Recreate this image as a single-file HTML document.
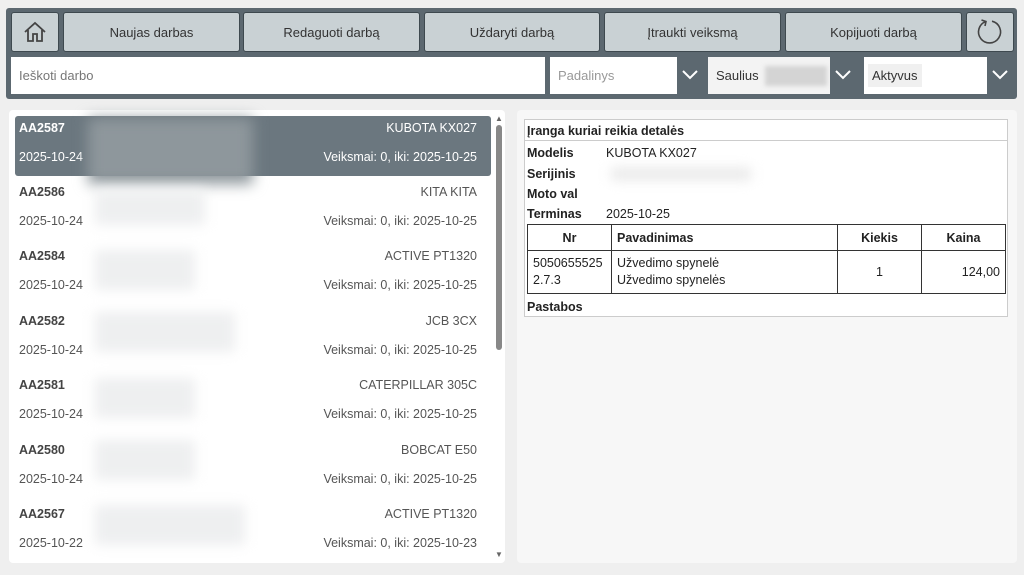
<!DOCTYPE html>
<html><head><meta charset="utf-8"><style>
*{box-sizing:border-box;margin:0;padding:0}
body{width:1024px;height:575px;background:#efefef;font-family:"Liberation Sans",sans-serif;position:relative;overflow:hidden;color:#222}
.abs{position:absolute}
.bar{left:6px;top:8px;width:1011px;height:91px;background:#5c6870;border-radius:3px}
.btn{top:12px;height:40px;background:#c9d1d4;border:1.5px solid #3e494f;border-radius:3px;font-size:13px;color:#333;display:flex;align-items:center;justify-content:center}
.inp{top:57px;height:37px;background:#fff;font-size:13px;display:flex;align-items:center;padding-left:8px;color:#777}
.chev{top:57px;height:37px;width:26px;background:#5c6870}
.panel{background:#fff;border-radius:4px}
.row{left:15px;width:476px;height:60px;font-size:12.5px;color:#555}
.row b{position:absolute;left:4px;top:5px;color:#444}
.row .d{position:absolute;left:4px;top:34px}
.row .m{position:absolute;right:14px;top:5px}
.row .v{position:absolute;right:14px;top:34px}
.sel{background:#6b777f;color:#fff;border-radius:3px}
.sel b,.sel .d,.sel .m,.sel .v{color:#fff}
.blur{background:#eeeff0;filter:blur(6px)}
td,th{border:1px solid #333;font-size:12.5px;padding:2px 5px}
</style></head><body>
<div class="abs bar"></div>
<div class="abs btn" style="left:11px;width:48px"><svg width="26" height="24" viewBox="0 0 26 24"><path d="M3 12 L13 3 L23 12 M6 10 V21 H11 V14 H15 V21 H20 V10" fill="none" stroke="#444" stroke-width="1.8"/></svg></div>
<div class="abs btn" style="left:63px;width:177px">Naujas darbas</div>
<div class="abs btn" style="left:243px;width:177px">Redaguoti darbą</div>
<div class="abs btn" style="left:424px;width:176px">Uždaryti darbą</div>
<div class="abs btn" style="left:604px;width:177px">Įtraukti veiksmą</div>
<div class="abs btn" style="left:785px;width:177px">Kopijuoti darbą</div>
<div class="abs btn" style="left:966px;width:48px"><svg width="30" height="30" viewBox="0 0 30 30"><path d="M11 4.5 A11 11 0 1 0 17 4.2" fill="none" stroke="#444" stroke-width="1.6"/><path d="M10 9 L11 4.5 L6.5 3" fill="none" stroke="#444" stroke-width="1.6"/></svg></div>
<div class="abs inp" style="left:11px;width:534px">Ieškoti darbo</div>
<div class="abs inp" style="left:550px;width:127px;color:#999">Padalinys</div>
<div class="abs chev" style="left:677px"></div>
<div class="abs inp" style="left:708px;width:122px;background:#f3f3f3;color:#333">Saulius<span style="display:inline-block;width:62px;height:20px;background:#d4d4d4;margin-left:6px;filter:blur(2px)"></span></div>
<div class="abs chev" style="left:830px"></div>
<div class="abs inp" style="left:864px;width:123px;color:#333"><span style="background:#f0f0f0;padding:4px 4px;margin-left:-4px">Aktyvus</span></div>
<div class="abs chev" style="left:987px"></div>
<svg class="abs" style="left:0;top:0" width="1024" height="100"><g fill="none" stroke="#fff" stroke-width="2"><path d="M683 71 L690 78 L697 71"/><path d="M836 71 L843 78 L850 71"/><path d="M993 71 L1000 78 L1007 71"/></g></svg>
<div class="abs panel" style="left:9px;top:110px;width:496px;height:453px"></div>
<div class="abs panel" style="left:517px;top:110px;width:500px;height:453px;background:#f7f7f7"></div>
<div class="abs row sel" style="top:116px"><b>AA2587</b><span class="d">2025-10-24</span><span class="m">KUBOTA KX027</span><span class="v">Veiksmai: 0, iki: 2025-10-25</span></div>
<div class="abs row" style="top:180px"><b>AA2586</b><span class="d">2025-10-24</span><span class="m">KITA KITA</span><span class="v">Veiksmai: 0, iki: 2025-10-25</span></div>
<div class="abs row" style="top:244px"><b>AA2584</b><span class="d">2025-10-24</span><span class="m">ACTIVE PT1320</span><span class="v">Veiksmai: 0, iki: 2025-10-25</span></div>
<div class="abs row" style="top:309px"><b>AA2582</b><span class="d">2025-10-24</span><span class="m">JCB 3CX</span><span class="v">Veiksmai: 0, iki: 2025-10-25</span></div>
<div class="abs row" style="top:373px"><b>AA2581</b><span class="d">2025-10-24</span><span class="m">CATERPILLAR 305C</span><span class="v">Veiksmai: 0, iki: 2025-10-25</span></div>
<div class="abs row" style="top:438px"><b>AA2580</b><span class="d">2025-10-24</span><span class="m">BOBCAT E50</span><span class="v">Veiksmai: 0, iki: 2025-10-25</span></div>
<div class="abs row" style="top:502px"><b>AA2567</b><span class="d">2025-10-22</span><span class="m">ACTIVE PT1320</span><span class="v">Veiksmai: 0, iki: 2025-10-23</span></div>
<div class="abs" style="left:88px;top:118px;width:165px;height:66px;background:#8e979c;filter:blur(7px)"></div>
<div class="abs blur" style="left:95px;top:190px;width:110px;height:35px"></div>
<div class="abs blur" style="left:95px;top:250px;width:100px;height:40px"></div>
<div class="abs blur" style="left:95px;top:312px;width:140px;height:40px"></div>
<div class="abs blur" style="left:95px;top:378px;width:100px;height:40px"></div>
<div class="abs blur" style="left:95px;top:440px;width:100px;height:40px"></div>
<div class="abs blur" style="left:95px;top:505px;width:150px;height:40px"></div>
<div class="abs" style="left:496px;top:125px;width:6px;height:225px;background:#888;border-radius:3px"></div>
<div class="abs" style="left:495px;top:114px;font-size:8px;color:#666">▲</div>
<div class="abs" style="left:495px;top:550px;font-size:8px;color:#666">▼</div>
<div class="abs" style="left:524px;top:119px;width:484px;height:198px;background:#fff;border:1px solid #ccc">
<div style="font-size:12.5px;font-weight:bold;padding:4px 2px;border-bottom:1px solid #ccc;height:21px">Įranga kuriai reikia detalės</div>
<div style="font-size:12.5px;position:relative;height:82px">
<b style="position:absolute;left:2px;top:5px">Modelis</b><span style="position:absolute;left:81px;top:5px">KUBOTA KX027</span>
<b style="position:absolute;left:2px;top:26px">Serijinis</b><span class="blur" style="position:absolute;left:86px;top:27px;width:140px;height:12px;background:#e8e8e8"></span>
<b style="position:absolute;left:2px;top:46px">Moto val</b>
<b style="position:absolute;left:2px;top:66px">Terminas</b><span style="position:absolute;left:81px;top:66px">2025-10-25</span>
</div>
<table style="position:absolute;left:2px;top:104px;width:479px;border-collapse:collapse">
<tr style="height:26px"><th style="width:84px">Nr</th><th style="text-align:left">Pavadinimas</th><th style="width:84px">Kiekis</th><th style="width:84px">Kaina</th></tr>
<tr style="height:43px;font-weight:normal"><td style="line-height:17px">5050655525<br>2.7.3</td><td style="line-height:17px">Užvedimo spynelė<br>Užvedimo spynelės</td><td style="text-align:center">1</td><td style="text-align:right">124,00</td></tr>
</table>
<b style="position:absolute;left:2px;top:180px;font-size:12.5px">Pastabos</b>
</div>
</body></html>
